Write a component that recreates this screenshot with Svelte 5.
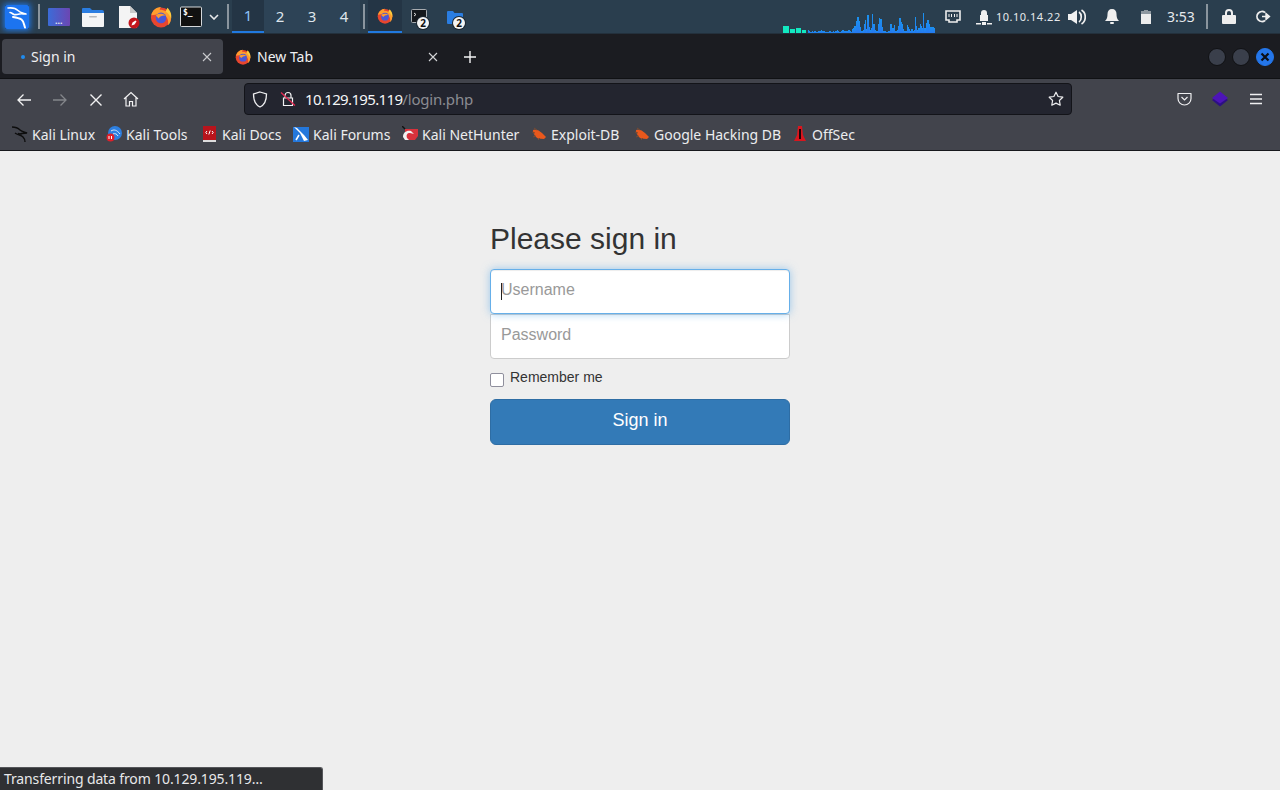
<script lang="ts">
  // network graph samples, in px high
  const teal = [
    { w: 6, h: 7 },
    { w: 5, h: 4 },
    { w: 5, h: 5 },
    { w: 4, h: 3 },
  ];
  const blue = [
    3,2,1,2,1,2,2,1,2,2,2,3,2,2,1,1,1,1,2,1,1,2,1,2,3,2,1,1,2,3,2,2,2,2,3,2,1,4,5,7,12,16,16,12,6,2,3,9,13,4,18,6,3,
    5,19,9,3,2,2,9,15,14,6,2,2,2,1,2,2,9,9,5,8,2,2,3,7,15,11,9,4,2,2,8,6,4,2,4,2,3,16,7,3,5,9,7,5,20,5,10,13,13,9,6,6,6,5,
  ];
  const workspaces = ["1", "2", "3", "4"];
</script>

{#snippet firefox(size)}
  <svg width={size} height={size} viewBox="0 0 24 24">
    <circle cx="12" cy="12.500" r="11" fill="#e8462f" />
    <path d="M1.500 10C2.500 5 6 1.500 12 1c-1 1-1.500 2-1.500 3 5 0 10 2.500 12 7 1 4 0 8-3 10 1.500-5-1-11-7-12-5-.5-7 1-11.500 1z" fill="#ff9d2e" />
    <path d="M19 2c3 3 5 7 4 12-1-3-3-6-6-8z" fill="#ffcb3c" />
    <circle cx="12" cy="13" r="5.800" fill="#4a58d8" />
    <path d="M6.500 10c3-2 8-2 10.500.5-3-.5-6 .5-7.500 3-1-1-2.500-2-3-3.500z" fill="#ff9a2e" />
  </svg>
{/snippet}

{#snippet terminalIcon(size)}
  <svg width={size} height={size} viewBox="0 0 22 22">
    <rect x="0.5" y="1" width="21" height="19.500" rx="1" fill="#111" stroke="#d5d8db" />
    <text x="3" y="9" class="term-text">$_</text>
  </svg>
{/snippet}

{#snippet countBadge()}
  <span class="badge">2</span>
{/snippet}

{#snippet exploitBug()}
  <svg width="16" height="16" viewBox="0 0 16 16"><path d="M2 4c3-1 6 0 9 3l4 4-2 2-6-.5C4 11 2 7 2 4z" fill="#e8581c" /><path d="M3 2l3 2M1 6l3 1M2 11l3-1M7 14l2-2" stroke="#7a4a30" /></svg>
{/snippet}

<div class="screen">
  <header class="panel">
    <div class="kali-logo">
      <svg width="24" height="24" viewBox="0 0 24 24">
        <rect width="24" height="24" rx="2" fill="#1c74f0" />
        <g fill="none" stroke="#fff" stroke-linejoin="round" stroke-linecap="round">
          <path d="M3 3c4-.5 8 .5 10 2.500s5 2.500 8 3.500c-3 0-4.500-.5-6.500 0s-4 1-5.500.5-2.500-2-4-2" stroke-width="1.600" />
          <path d="M8 12c3 .5 6 1 8.500 2.500 2.500 2 2.500 5.500 3.500 8" stroke-width="2" />
        </g>
      </svg>
    </div>
    <i class="sep first"></i>
    <div class="launcher l-desk"><span class="dots">...</span></div>
    <div class="launcher l-files">
      <svg width="24" height="22" viewBox="0 0 24 22">
        <path d="M1 3a1 1 0 0 1 1-1h7l2 2h10a2 2 0 0 1 2 2v2H1z" fill="#2a7de1" />
        <path d="M1 7h22v13a1 1 0 0 1-1 1H2a1 1 0 0 1-1-1z" fill="#f3f4f5" />
        <rect x="8" y="10" width="8" height="1.600" rx="0.800" fill="#b5b8bc" />
      </svg>
    </div>
    <div class="launcher l-doc">
      <svg width="24" height="24" viewBox="0 0 24 24">
        <path d="M2 1h11l7 7v15H2z" fill="#f4f4f4" />
        <path d="M13 1l7 7h-7z" fill="#c9c9c9" />
        <circle cx="17" cy="18" r="5.500" fill="#c4161c" />
        <path d="M14.500 20.500l1-3 3-2 1 1-2 3z" fill="#fff" />
      </svg>
    </div>
    <div class="launcher l-fox">{@render firefox(22)}</div>
    <div class="launcher l-term">{@render terminalIcon(22)}</div>
    <svg class="chev" width="10" height="6" viewBox="0 0 10 6"><path d="M1 1l4 4 4-4" fill="none" stroke="#e6e8ea" stroke-width="1.600" /></svg>
    <i class="sep"></i>
    <nav class="workspaces">
      {#each workspaces as ws, i}
        <span class="ws" class:active={i === 0}>{ws}</span>
      {/each}
    </nav>
    <i class="sep"></i>
    <div class="win active">{@render firefox(16)}</div>
    <div class="win">
      <svg width="16" height="15" viewBox="0 0 16 15"><rect x="0.500" y="0.500" width="15" height="13" rx="1" fill="#15181c" stroke="#a8acb0" /><path d="M3 4l2 1.500L3 7" fill="none" stroke="#ddd" /></svg>
      {@render countBadge()}
    </div>
    <div class="win last">
      <svg width="16" height="14" viewBox="0 0 16 14"><path d="M0 2a1 1 0 0 1 1-1h5l1.500 2H15a1 1 0 0 1 1 1v9a1 1 0 0 1-1 1H1a1 1 0 0 1-1-1z" fill="#2a7de1" /></svg>
      {@render countBadge()}
    </div>

    <div class="graph">
      {#each teal as bar}
        <span class="teal-bar" style="width:{bar.w}px;height:{bar.h}px"></span>
      {/each}
      <span class="blue-bars">
        {#each blue as h}
          <span class="blue-bar" style="height:{h}px"></span>
        {/each}
      </span>
    </div>

    <div class="tray">
      <svg class="t-net" width="16" height="14" viewBox="0 0 16 14"><path d="M1 1h14v9h-3v2H4v-2H1z" fill="none" stroke="#eee" stroke-width="1.600" /><path d="M4 4v3M6.500 4v3M9.500 4v3M12 4v3" stroke="#eee" /></svg>
      <svg class="t-lock" width="16" height="16" viewBox="0 0 16 16"><path d="M5 6V4a3 3 0 0 1 6 0v2h1v6H4V6z" fill="#f0f0f0" /><rect x="0" y="14" width="5" height="1.500" fill="#f0f0f0" /><rect x="6" y="13" width="4" height="3" fill="#f0f0f0" /><rect x="11" y="14" width="5" height="1.500" fill="#f0f0f0" /></svg>
      <span class="ip">10.10.14.22</span>
      <svg class="t-vol" width="18" height="16" viewBox="0 0 18 16"><path d="M0 5h3l6-4v14l-6-4H0z" fill="#f0f0f0" /><path d="M11 3c3 2 3 8 0 10M13.500 1c5 3 5 11 0 14" fill="none" stroke="#f0f0f0" stroke-width="1.700" /></svg>
      <svg class="t-bell" width="14" height="15" viewBox="0 0 14 15"><path d="M7 0c3 0 4.500 2 4.500 5 0 3 .5 5 2.500 7H0c2-2 2.500-4 2.500-7C2.500 2 4 0 7 0z" fill="#f0f0f0" /><rect x="5" y="13" width="4" height="2" rx="1" fill="#f0f0f0" /></svg>
      <svg class="t-bat" width="10" height="14" viewBox="0 0 10 14"><rect x="3" y="0" width="4" height="2" fill="#8d979f" /><rect x="0" y="1" width="10" height="3" fill="#8d979f" /><rect x="0" y="4" width="10" height="10" fill="#ececec" /></svg>
      <span class="clock">3:53</span>
      <i class="sep tray-sep"></i>
      <svg class="t-lock2" width="14" height="15" viewBox="0 0 14 15"><path d="M3 6V4a4 4 0 0 1 8 0v2h2a1 1 0 0 1 1 1v7a1 1 0 0 1-1 1H1a1 1 0 0 1-1-1V7a1 1 0 0 1 1-1zm2 0h4V4a2 2 0 0 0-4 0z" fill="#eee" /></svg>
      <svg class="t-out" width="15" height="13" viewBox="0 0 15 13"><path d="M9 2.500a5 5 0 1 0 0 8" fill="none" stroke="#eee" stroke-width="1.800" /><path d="M6 6.500h6M10 3.500l3.500 3-3.500 3z" fill="#eee" stroke="#eee" stroke-width="1.400" /></svg>
    </div>
  </header>

  <div class="tabbar">
    <div class="tab selected">
      <span class="dot"></span>
      <span class="tab-title">Sign in</span>
      <svg class="tab-close" width="10" height="10" viewBox="0 0 10 10"><path d="M1 1l8 8M9 1l-8 8" stroke="#c9cacd" stroke-width="1.100" /></svg>
    </div>
    <div class="tab">
      <span class="tab-fav">{@render firefox(16)}</span>
      <span class="tab-title">New Tab</span>
      <svg class="tab-close" width="10" height="10" viewBox="0 0 10 10"><path d="M1 1l8 8M9 1l-8 8" stroke="#d5d6d8" stroke-width="1.100" /></svg>
    </div>
    <svg class="new-tab" width="12" height="12" viewBox="0 0 12 12"><path d="M6 0v12M0 6h12" stroke="#f4f4f5" stroke-width="1.400" /></svg>
    <div class="win-controls">
      <span class="wc"></span>
      <span class="wc"></span>
      <span class="wc close">
        <svg width="10" height="10" viewBox="0 0 10 10"><path d="M1.500 1.500l7 7M8.500 1.500l-7 7" stroke="#0b0f18" stroke-width="2.200" /></svg>
      </span>
    </div>
  </div>

  <div class="toolbar">
    <svg class="tb tb-back" width="16" height="14" viewBox="0 0 16 14"><path d="M15 7H2M7.500 1.500L2 7l5.500 5.500" fill="none" stroke="#f2f2f3" stroke-width="1.300" /></svg>
    <svg class="tb tb-fwd" width="16" height="14" viewBox="0 0 16 14"><path d="M1 7h13M8.500 1.500L14 7l-5.500 5.500" fill="none" stroke="#84868b" stroke-width="1.300" /></svg>
    <svg class="tb tb-stop" width="14" height="14" viewBox="0 0 14 14"><path d="M1.500 1.500l11 11M12.500 1.500l-11 11" stroke="#f2f2f3" stroke-width="1.400" /></svg>
    <svg class="tb tb-home" width="16" height="16" viewBox="0 0 16 16"><path d="M1 8l7-6.500L15 8M3 6.500V15h3.500v-4.500h3V15H13V6.500" fill="none" stroke="#f2f2f3" stroke-width="1.200" /></svg>
    <div class="urlbar">
      <svg class="u-shield" width="16" height="17" viewBox="0 0 16 17"><path d="M8 1l6.500 2c0 6-1 10.500-6.500 13C2.500 13.500 1.500 9 1.500 3z" fill="none" stroke="#eeeef0" stroke-width="1.300" /></svg>
      <svg class="u-lock" width="16" height="16" viewBox="0 0 16 16"><path d="M5 7V4.500a3 3 0 0 1 6 0V7M3.500 7h9v7.500h-9z" fill="none" stroke="#f2f2f3" stroke-width="1.200" /><path d="M1 1.500l14 13" stroke="#e22850" stroke-width="1.300" /></svg>
      <span class="url"><span class="host">10.129.195.119</span><span class="path">/login.php</span></span>
      <svg class="u-star" width="16" height="16" viewBox="0 0 16 16"><path d="M8 1.200l2.100 4.300 4.700.7-3.400 3.300.8 4.700L8 12.100l-4.200 2.100.8-4.700L1.200 6.200l4.700-.7z" fill="none" stroke="#eeeef0" stroke-width="1.200" stroke-linejoin="round" /></svg>
    </div>
    <svg class="tb tb-pocket" width="15" height="14" viewBox="0 0 15 14"><path d="M1 1.500h13v5a6.500 6.500 0 0 1-13 0z" fill="none" stroke="#eeeef0" stroke-width="1.200" stroke-linejoin="round" /><path d="M4.500 5l3 3 3-3" fill="none" stroke="#eeeef0" stroke-width="1.200" /></svg>
    <svg class="tb tb-ext" width="16" height="16" viewBox="0 0 16 16"><path d="M0 9l8-5 8 5-8 6.500z" fill="#2d0f85" /><path d="M0 7l8-6.500L16 7l-8 5.500z" fill="#4d14b8" /></svg>
    <svg class="tb tb-menu" width="14" height="12" viewBox="0 0 14 12"><path d="M1 1.500h12M1 6h12M1 10.500h12" stroke="#f0f0f1" stroke-width="1.300" /></svg>
  </div>

  <div class="bookmarks">
    <a class="bm">
      <svg width="16" height="16" viewBox="0 0 16 16"><g fill="none" stroke="#0d0d0d" stroke-width="1.400"><path d="M0 1c4 0 6 1 8 3s5 2 7 3c-2 0-4 0-5 .5s-3 .5-4 0" /><path d="M3 7c3 2 6 2 8 4 1 1 2 3 2 5" /></g></svg>
      Kali Linux
    </a>
    <a class="bm">
      <svg width="16" height="16" viewBox="0 0 16 16"><circle cx="9" cy="7" r="7" fill="#2d7fe0" /><path d="M5 5c3-2 6-1 9 3M7 8c2-1 4 0 5 2" fill="none" stroke="#dce9f8" /><circle cx="4.500" cy="11.500" r="4" fill="#e0202a" /><path d="M3 10v3M5.500 10v3" stroke="#fff" /></svg>
      Kali Tools
    </a>
    <a class="bm">
      <svg width="16" height="16" viewBox="0 0 16 16"><rect x="1" y="0" width="13" height="15" fill="#b8141c" /><rect x="1" y="14" width="13" height="2" fill="#ddd" /><path d="M5 5L3.800 6.500 5 8M10 5l1.200 1.500L10 8M8.200 4.500l-1.400 4" fill="none" stroke="#fff" /></svg>
      Kali Docs
    </a>
    <a class="bm">
      <svg width="16" height="16" viewBox="0 0 16 16"><path d="M0 1h16v15H0z" fill="#2478dc" /><path d="M1 1l6 6 4 8 4-1-4-5-7-7z" fill="#fff" /><path d="M6 9l-3 5" stroke="#fff" stroke-width="1.500" /></svg>
      Kali Forums
    </a>
    <a class="bm">
      <svg width="16" height="16" viewBox="0 0 16 16"><path d="M3 3h13v7l-3 4H3z" fill="#d8323c" /><path d="M1 11c0-5 4-7 8-6l3 3-4-1c-3 0-4 2-3 5l2 2H3z" fill="#f2f2f2" /><path d="M0 0l3 3" stroke="#111" stroke-width="1.400" /></svg>
      Kali NetHunter
    </a>
    <a class="bm">
      {@render exploitBug()}
      Exploit-DB
    </a>
    <a class="bm">
      {@render exploitBug()}
      Google Hacking DB
    </a>
    <a class="bm">
      <svg width="16" height="16" viewBox="0 0 16 16"><path d="M6 0h4l1 9 3 6H2l3-6z" fill="#d8161e" /><path d="M8 3v10" stroke="#1a0508" stroke-width="2" /></svg>
      OffSec
    </a>
  </div>

  <main class="page">
    <form class="signin">
      <h2>Please sign in</h2>
      <div class="input focused"><span class="caret"></span>Username</div>
      <div class="input">Password</div>
      <label class="remember">
        <span class="box"></span>
        <span>Remember me</span>
      </label>
      <button type="button" class="submit">Sign in</button>
    </form>
  </main>

  <div class="status">Transferring data from 10.129.195.119…</div>
</div>

<style>
  :global(body) {
    margin: 0;
    background: #eee;
  }

  .screen {
    position: relative;
    width: 1280px;
    height: 790px;
    overflow: hidden;
    display: flex;
    flex-direction: column;
    font-family: "Noto Sans", sans-serif;
  }

  .panel {
    flex: none;
    height: 34px;
    box-sizing: border-box;
    display: flex;
    align-items: center;
    background: #2a3e4e;
    border-bottom: 1px solid #23303c;
    color: #e6e9ec;
    position: relative;
  }

  .kali-logo {
    margin-left: 5px;
    width: 24px;
    height: 24px;
    box-shadow: 0 0 6px 1px #1f7cf2;
    line-height: 0;
  }

  .sep {
    display: block;
    width: 2px;
    height: 25px;
    background: #8a959e;
    flex: none;
  }

  .sep.first {
    margin-left: 9px;
  }

  .launcher {
    display: flex;
    align-items: center;
    justify-content: center;
    line-height: 0;
    flex: none;
    height: 24px;
  }

  .l-desk {
    width: 22px;
    height: 18px;
    margin-left: 8px;
    background: linear-gradient(90deg, #3b6cd8, #6c46b2);
    border-radius: 1px;
    position: relative;
  }

  .dots {
    position: absolute;
    left: 7px;
    bottom: 1px;
    line-height: 1;
    font-size: 9px;
    color: #e4e8f2;
    font-weight: 700;
  }

  .l-files {
    margin-left: 11px;
  }

  .l-doc {
    margin-left: 12px;
  }

  .l-fox {
    margin-left: 9px;
  }

  .l-term {
    margin-left: 8px;
  }

  .term-text {
    font: 700 8px "DejaVu Sans Mono", monospace;
    fill: #fff;
  }

  .chev {
    margin: 0 8px 0 7px;
    flex: none;
  }

  .workspaces {
    display: flex;
    height: 100%;
    margin: 0 3px;
  }

  .ws {
    width: 32px;
    height: 100%;
    box-sizing: border-box;
    display: flex;
    align-items: center;
    justify-content: center;
    font-size: 15px;
    background: #2d4356;
    color: #dfe6ec;
    padding-bottom: 2px;
  }

  .ws.active {
    background: #243545;
    color: #8fc3f5;
    border-bottom: 2px solid #2179e0;
  }

  .win {
    position: relative;
    width: 34px;
    height: 100%;
    display: flex;
    align-items: center;
    justify-content: center;
    line-height: 0;
    box-sizing: border-box;
    flex: none;
  }

  .win.active {
    background: #243545;
    border-bottom: 2px solid #2179e0;
    margin-left: 3px;
  }

  .win.last {
    margin-left: 2px;
  }

  .badge {
    position: absolute;
    left: 15px;
    top: 17px;
    width: 12px;
    height: 12px;
    border-radius: 50%;
    background: #f4f4f4;
    box-shadow: 0 0 0 1px #1d2730;
    color: #111;
    font: 700 10px/12px "Noto Sans", sans-serif;
    text-align: center;
  }

  .graph {
    position: absolute;
    left: 783px;
    bottom: 0;
    display: flex;
    align-items: flex-end;
    gap: 1px;
  }

  .teal-bar {
    background: #12e8c0;
  }

  .blue-bars {
    display: flex;
    align-items: flex-end;
    margin-left: 1px;
  }

  .blue-bar {
    width: 1.200px;
    background: linear-gradient(#1a92f0, #2678f0);
  }

  .tray {
    position: absolute;
    left: 945px;
    top: 0;
    height: 33px;
    width: 335px;
    display: flex;
    align-items: center;
    color: #e6e9ec;
  }

  .t-lock {
    margin-left: 15px;
  }

  .ip {
    font-size: 11px;
    margin-left: 4px;
    width: 72px;
    letter-spacing: 0.500px;
  }

  .t-bell {
    margin-left: 19px;
  }

  .t-bat {
    margin-left: 22px;
  }

  .clock {
    margin-left: 16px;
    font-size: 14px;
  }

  .tray-sep {
    margin-left: 11px;
  }

  .t-lock2 {
    margin-left: 14px;
  }

  .t-out {
    margin-left: 20px;
  }

  .tabbar {
    flex: none;
    height: 45px;
    box-sizing: border-box;
    padding: 5px 0 4px 2px;
    display: flex;
    align-items: stretch;
    background: #1b1c21;
    border-bottom: 1px solid #101114;
    color: #f0f0f2;
    font-size: 14px;
    position: relative;
  }

  .tab {
    width: 227px;
    display: flex;
    align-items: center;
    box-sizing: border-box;
    padding: 0 12px 0 12px;
  }

  .tab.selected {
    width: 221px;
    background: #42444c;
    border-radius: 4px;
    padding: 0 11px 0 19px;
  }

  .dot {
    width: 4px;
    height: 4px;
    border-radius: 50%;
    background: #1f8cf0;
    margin-right: 6px;
  }

  .tab-fav {
    line-height: 0;
    margin-right: 6px;
  }

  .tab-title {
    flex: 1;
  }

  .new-tab {
    align-self: center;
    margin-left: 14px;
  }

  .win-controls {
    position: absolute;
    right: 6px;
    top: 14px;
    display: flex;
    gap: 6px;
  }

  .wc {
    width: 18px;
    height: 18px;
    box-sizing: border-box;
    border-radius: 50%;
    background: #3a3f4b;
    border: 1px solid #101114;
    display: flex;
    align-items: center;
    justify-content: center;
  }

  .wc.close {
    background: #2476ea;
    border-color: #2476ea;
  }

  .toolbar {
    flex: none;
    height: 36px;
    box-sizing: border-box;
    background: #42444c;
    display: flex;
    align-items: flex-end;
    position: relative;
  }

  .tb {
    position: absolute;
    top: 14px;
  }

  .tb-back { left: 16px; }
  .tb-fwd { left: 52px; }
  .tb-stop { left: 89px; }
  .tb-home { left: 123px; top: 12px; }
  .tb-pocket { left: 1177px; top: 13px; }
  .tb-ext { left: 1212px; top: 12px; }
  .tb-menu { left: 1249px; top: 14px; }

  .urlbar {
    margin-left: 244px;
    width: 828px;
    height: 32px;
    box-sizing: border-box;
    background: #23252f;
    border: 1px solid #131419;
    border-radius: 4px;
    display: flex;
    align-items: center;
    padding: 0 7px;
  }

  .u-lock {
    margin-left: 12px;
  }

  .url {
    flex: 1;
    margin-left: 9px;
    font-size: 15px;
    white-space: nowrap;
  }

  .host {
    color: #f5f5f6;
    letter-spacing: -0.650px;
  }

  .path {
    color: #8b8c92;
    letter-spacing: -0.200px;
  }

  .bookmarks {
    flex: none;
    height: 36px;
    box-sizing: border-box;
    background: #42444c;
    border-bottom: 1px solid #17181c;
    display: flex;
    align-items: center;
    padding: 3px 0 0 12px;
    font-size: 14px;
    color: #ecedef;
  }

  .bm {
    display: flex;
    align-items: center;
    gap: 4px;
    white-space: nowrap;
    flex: none;
    margin-right: 13px;
  }

  .bm svg {
    flex: none;
  }

  .bm:nth-child(1) { width: 81px; }
  .bm:nth-child(2) { width: 83px; }
  .bm:nth-child(3) { width: 78px; }
  .bm:nth-child(4) { width: 96px; }
  .bm:nth-child(5) { width: 116px; }
  .bm:nth-child(6) { width: 90px; }
  .bm:nth-child(7) { width: 145px; }

  .page {
    flex: 1;
    background: #eee;
    padding-top: 71px;
    font-family: "Liberation Sans", Arial, sans-serif;
    color: #333;
  }

  .signin {
    width: 300px;
    margin: 0 auto;
    display: flex;
    flex-direction: column;
  }

  h2 {
    margin: 0 0 14px;
    font-size: 30px;
    font-weight: 500;
    line-height: 33px;
  }

  .input {
    position: relative;
    height: 45px;
    box-sizing: border-box;
    padding: 9px 10px 0;
    background: #fff;
    border: 1px solid #ccc;
    border-radius: 0 0 4px 4px;
    font-size: 16px;
    line-height: 22px;
    color: #999;
  }

  .input.focused {
    z-index: 1;
    border-color: #66afe9;
    border-radius: 4px;
    box-shadow: inset 0 1px 1px rgba(0, 0, 0, 0.075), 0 0 8px rgba(102, 175, 233, 0.6);
  }

  .caret {
    position: absolute;
    left: 10px;
    top: 13px;
    width: 1px;
    height: 17px;
    background: #222;
  }

  .remember {
    display: flex;
    align-items: flex-start;
    margin-top: 10px;
    font-size: 14px;
    line-height: 16px;
  }

  .box {
    flex: none;
    box-sizing: border-box;
    width: 14px;
    height: 14px;
    margin: 4px 6px 0 0;
    background: #fff;
    border: 1.500px solid #8f8f9d;
    border-radius: 2px;
  }

  .submit {
    margin-top: 12px;
    height: 46px;
    background: #337ab7;
    border: 1px solid #2e6da4;
    border-radius: 6px;
    color: #fff;
    font: 18px/24px "Liberation Sans", Arial, sans-serif;
    padding: 0 0 4px;
  }

  .status {
    position: absolute;
    left: 0;
    bottom: 0;
    width: 323px;
    height: 23px;
    box-sizing: border-box;
    padding-left: 4px;
    background: #2f3033;
    border-top: 1px solid #55565a;
    border-right: 1px solid #55565a;
    border-top-right-radius: 3px;
    color: #e8e8ea;
    font-size: 14px;
    letter-spacing: -0.130px;
    line-height: 22px;
    white-space: nowrap;
  }
</style>
